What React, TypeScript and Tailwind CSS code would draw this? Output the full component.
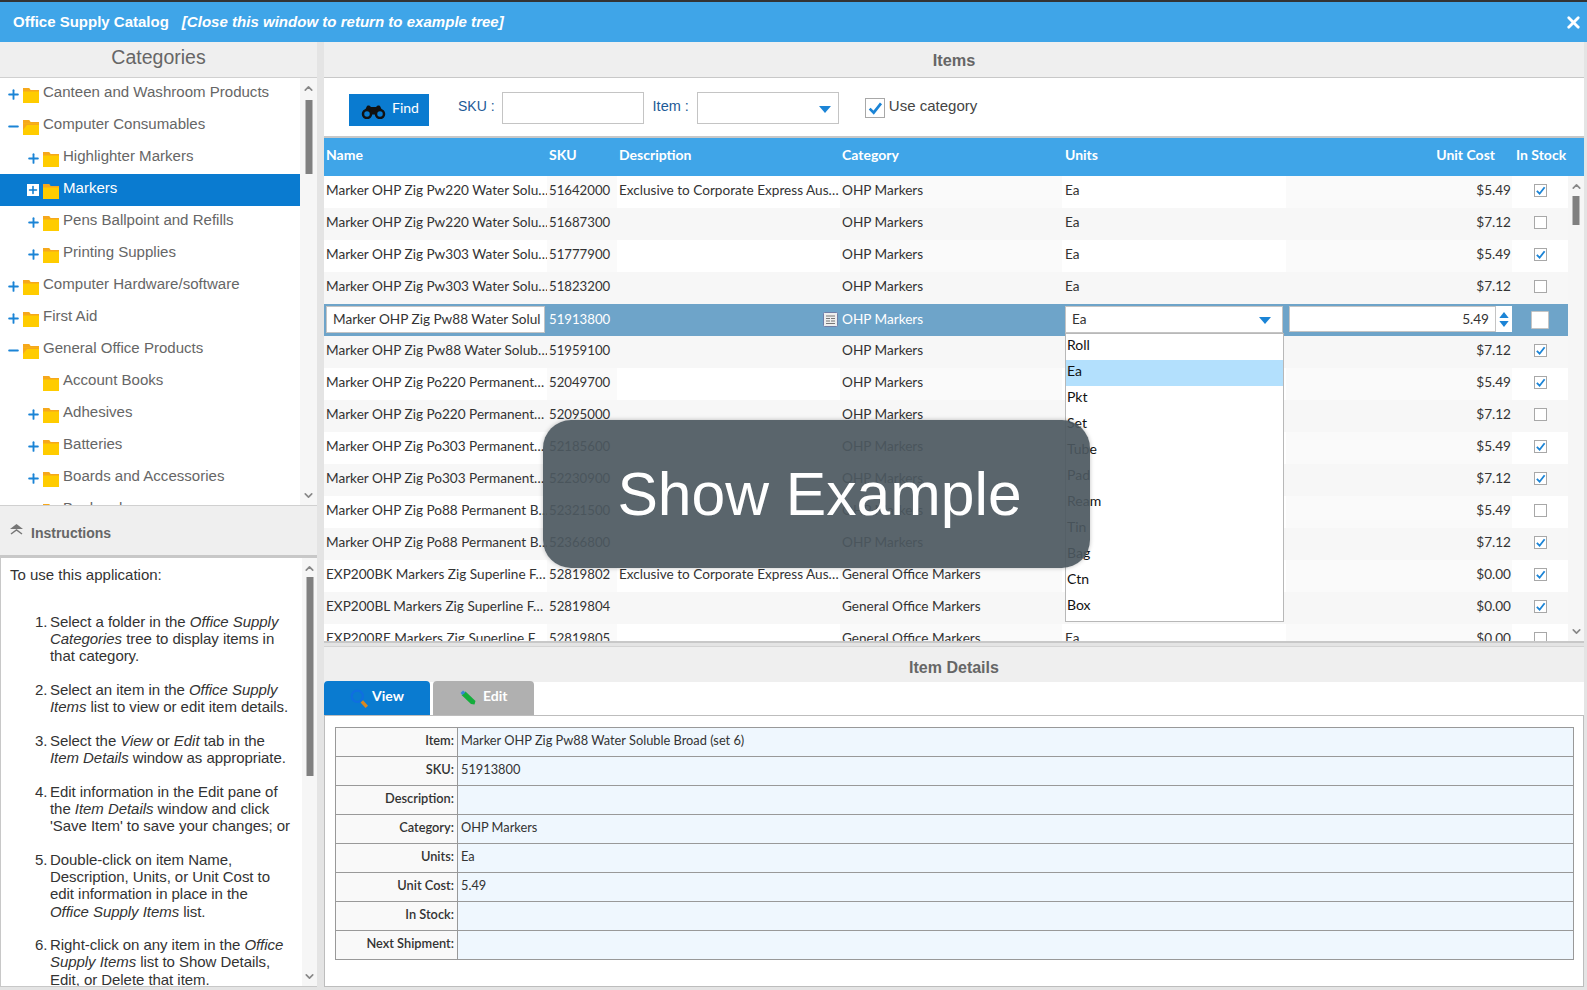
import { ChevronDown, ChevronUp, Minus, Plus, X } from "lucide-react";

const treeRows = [
  { label: "Canteen and Washroom Products", depth: 0, mark: "plus" },
  { label: "Computer Consumables", depth: 0, mark: "minus", open: true },
  { label: "Highlighter Markers", depth: 1, mark: "plus" },
  { label: "Markers", depth: 1, mark: "box", selected: true },
  { label: "Pens Ballpoint and Refills", depth: 1, mark: "plus" },
  { label: "Printing Supplies", depth: 1, mark: "plus" },
  { label: "Computer Hardware/software", depth: 0, mark: "plus" },
  { label: "First Aid", depth: 0, mark: "plus" },
  { label: "General Office Products", depth: 0, mark: "minus", open: true },
  { label: "Account Books", depth: 1, mark: "none" },
  { label: "Adhesives", depth: 1, mark: "plus" },
  { label: "Batteries", depth: 1, mark: "plus" },
  { label: "Boards and Accessories", depth: 1, mark: "plus" },
  { label: "Bookends", depth: 1, mark: "plus" },
];

const EXCL = "Exclusive to Corporate Express Aus…";

const items = [
  ["Marker OHP Zig Pw220 Water Solu…", "51642000", EXCL, "OHP Markers", "$5.49", true],
  ["Marker OHP Zig Pw220 Water Solu…", "51687300", "", "OHP Markers", "$7.12", false],
  ["Marker OHP Zig Pw303 Water Solu…", "51777900", "", "OHP Markers", "$5.49", true],
  ["Marker OHP Zig Pw303 Water Solu…", "51823200", "", "OHP Markers", "$7.12", false],
  ["Marker OHP Zig Pw88 Water Solul", "51913800", "", "OHP Markers", "5.49", false],
  ["Marker OHP Zig Pw88 Water Solub…", "51959100", "", "OHP Markers", "$7.12", true],
  ["Marker OHP Zig Po220 Permanent…", "52049700", "", "OHP Markers", "$5.49", true],
  ["Marker OHP Zig Po220 Permanent…", "52095000", "", "OHP Markers", "$7.12", false],
  ["Marker OHP Zig Po303 Permanent…", "52185600", "", "OHP Markers", "$5.49", true],
  ["Marker OHP Zig Po303 Permanent…", "52230900", "", "OHP Markers", "$7.12", true],
  ["Marker OHP Zig Po88 Permanent B…", "52321500", "", "OHP Markers", "$5.49", false],
  ["Marker OHP Zig Po88 Permanent B…", "52366800", "", "OHP Markers", "$7.12", true],
  ["EXP200BK Markers Zig Superline F…", "52819802", EXCL, "General Office Markers", "$0.00", true],
  ["EXP200BL Markers Zig Superline F…", "52819804", "", "General Office Markers", "$0.00", true],
  ["EXP200RE Markers Zig Superline F…", "52819805", "", "General Office Markers", "$0.00", false],
] as const;

const units = ["Roll", "Ea", "Pkt", "Set", "Tube", "Pad", "Ream", "Tin", "Bag", "Ctn", "Box"];

const details = [
  ["Item:", "Marker OHP Zig Pw88 Water Soluble Broad (set 6)"],
  ["SKU:", "51913800"],
  ["Description:", ""],
  ["Category:", "OHP Markers"],
  ["Units:", "Ea"],
  ["Unit Cost:", "5.49"],
  ["In Stock:", ""],
  ["Next Shipment:", ""],
];

const Folder = ({ open }: { open?: boolean }) => (
  <svg width="16" height="15" viewBox="0 0 16 15" className="shrink-0">
    <path d="M0 0h6l1.500 2H16v13H0z" fill="#ffcc00" />
    <path d="M0 0h6l1.500 2H16v1.500H0z" fill="#f6a81c" />
    {open && <path d="M0 3.500h16v1.500H4L0 10z" fill="#f6a81c" />}
  </svg>
);

const TreeRow = ({ row }: { row: (typeof treeRows)[number] }) => (
  <div
    className={`flex h-8 shrink-0 items-center ${row.depth ? "pl-[27px]" : "pl-[7px]"} ${
      row.selected ? "bg-[#0a7bd0] text-white" : "text-[#666666]"
    }`}
  >
    <span className="flex h-3 w-3 shrink-0 items-center justify-center text-[#1b84d6]">
      {row.mark === "plus" && <Plus size={15} strokeWidth={3} className="shrink-0" />}
      {row.mark === "minus" && <Minus size={15} strokeWidth={3} className="shrink-0" />}
      {row.mark === "box" && (
        <span className="flex h-3 w-3 items-center justify-center bg-white text-[#0a7bd0]">
          <Plus size={12} strokeWidth={3} />
        </span>
      )}
    </span>
    <span className="ml-[4px] mt-[2px]">
      <Folder open={row.open} />
    </span>
    <span className="ml-[4px] -mt-[3px] whitespace-nowrap text-[15.050px]">{row.label}</span>
  </div>
);

const ScrollBar = ({ thumbTop, thumbH, width }: { thumbTop: string; thumbH: string; width: string }) => (
  <div className={`relative flex h-full shrink-0 flex-col items-center justify-between bg-[#f6f6f6] ${width}`}>
    <ChevronUp size={13} strokeWidth={3} className="mt-[4px] text-[#888888]" />
    <div className={`absolute left-1/2 w-[7px] -translate-x-1/2 bg-[#808080] ${thumbTop} ${thumbH}`} />
    <ChevronDown size={13} strokeWidth={3} className="mb-[3px] text-[#888888]" />
  </div>
);

const Check = ({ checked, big }: { checked: boolean; big?: boolean }) => (
  <span
    className={`flex items-center justify-center border-[1.5px] border-[#a8a8a8] bg-white ${
      big ? "h-5 w-5" : "h-[13px] w-[13px]"
    }`}
  >
    {checked && (
      <svg viewBox="0 0 12 12" className={big ? "h-4 w-4" : "h-[11px] w-[11px]"}>
        <path d="M2 6.500 5 9.500 10.500 2.500" fill="none" stroke="#1b84d6" strokeWidth="2" />
      </svg>
    )}
  </span>
);

const Caret = () => (
  <svg width="12" height="7" viewBox="0 0 12 7">
    <path d="M0 0h12L6 7z" fill="#1b84d6" />
  </svg>
);

const Binoculars = () => (
  <svg width="25" height="14" viewBox="0 0 25 14" className="mt-[3px]">
    <path d="M6 1c2-1 3 0 4 1h5c1-1 2-2 4-1l3 6H3z" fill="#111111" />
    <circle cx="6" cy="9" r="4" fill="#0a7bd0" stroke="#111111" strokeWidth="2.500" />
    <circle cx="19" cy="9" r="4" fill="#0a7bd0" stroke="#111111" strokeWidth="2.500" />
    <rect x="9.500" y="6" width="6" height="3.500" fill="#111111" />
  </svg>
);

const Instruction = ({ n, children }: { n: number; children: React.ReactNode }) => (
  <div className="mb-[16.800px] flex">
    <span className="w-[15px] shrink-0">{n}.</span>
    <p className="whitespace-nowrap">{children}</p>
  </div>
);

const GridRow = ({ index }: { index: number }) => {
  const [name, sku, desc, cat, cost, inStock] = items[index];
  const odd = index % 2 === 0;
  const shade = odd ? "bg-[#fafafa]" : "bg-[#f7f7f7]";
  const base = odd ? "bg-white" : "bg-[#f7f7f7]";
  return (
    <div className="flex h-8 shrink-0 text-[13.600px] text-[#333333]">
      <div className={`w-[223px] whitespace-nowrap pl-[2px] leading-[29px] ${base}`}>{name}</div>
      <div className={`w-[70px] pl-[2px] text-[13.200px] leading-[29px] ${shade}`}>{sku}</div>
      <div className={`w-[223px] whitespace-nowrap pl-[2px] leading-[29px] ${base}`}>{desc}</div>
      <div className={`w-[222px] pl-[2px] leading-[29px] ${shade}`}>{cat}</div>
      <div className={`w-[224px] pl-[3px] leading-[29px] ${base}`}>Ea</div>
      <div className={`w-[226px] pr-[1px] text-right leading-[29px] ${shade}`}>{cost}</div>
      <div className={`flex w-[56px] items-center justify-center pb-[4px] ${base}`}>
        <Check checked={inStock} />
      </div>
    </div>
  );
};

const SelectedRow = () => (
  <div className="flex h-8 shrink-0 items-start bg-[#6ea4c9] pt-[2px] text-[13.600px] leading-[27px] text-white">
    <div className="w-[223px] pl-[2px]">
      <div className="h-[27px] w-[219px] overflow-hidden whitespace-nowrap border-[1.5px] border-[#c4c4c4] bg-white pl-[6px] leading-[24px] text-[#333333]">
        Marker OHP Zig Pw88 Water Solul
      </div>
    </div>
    <div className="w-[70px] pl-[2px] text-[13.200px]">51913800</div>
    <div className="flex h-[27px] w-[223px] items-center justify-end pr-[2px]">
      <svg width="15" height="15" viewBox="0 0 15 15">
        <rect x="0.500" y="0.500" width="14" height="14" rx="1" fill="#eeeeee" stroke="#6f7fa8" />
        <path d="M3 4h9M3 6.500h4M8 6.500h4M3 9h4M8 9h4M3 11.500h9" stroke="#777777" />
      </svg>
    </div>
    <div className="w-[222px] pl-[2px]">OHP Markers</div>
    <div className="w-[224px] pl-[3px]">
      <div className="flex h-[27px] w-[218px] items-center justify-between border-[1.5px] border-[#c4c4c4] bg-white pl-[6px] pr-[11px] text-[#333333]">
        Ea
        <span className="mt-[2px]">
          <Caret />
        </span>
      </div>
    </div>
    <div className="flex w-[226px] items-center">
      <div className="ml-[3px] flex h-[26px] w-[207px] items-center justify-end border-[1.5px] border-[#c4c4c4] bg-white pr-[6px] text-[#333333]">
        5.49
      </div>
      <div className="flex h-[26px] w-[16px] flex-col items-center justify-center gap-[3px] bg-white">
        <svg width="10" height="6" viewBox="0 0 11 7">
          <path d="M0 7h11L5.500 0z" fill="#1b84d6" />
        </svg>
        <svg width="10" height="6" viewBox="0 0 11 7">
          <path d="M0 0h11L5.500 7z" fill="#1b84d6" />
        </svg>
      </div>
    </div>
    <div className="flex h-[28px] w-[56px] items-center justify-center">
      <span className="h-[18px] w-[18px] rounded-[1px] border border-[#c4c4c4] bg-white" />
    </div>
  </div>
);

export default function App() {
  return (
    <div className="relative flex h-[990px] w-[1587px] flex-col overflow-hidden border-t-2 border-[#333333] bg-[#e4e4e4] font-['Liberation_Sans',sans-serif]">
      {/* title bar */}
      <div className="flex h-[40px] shrink-0 items-center bg-[#3fa5e8] pl-[13px] pr-[4px] text-white">
        <span className="text-[15px] font-bold">Office Supply Catalog</span>
        <span className="ml-[13px] text-[15.050px] font-bold italic">[Close this window to return to example tree]</span>
        <X size={19} strokeWidth={3.5} className="ml-auto" />
      </div>

      <div className="flex min-h-0 flex-1 pb-[3px]">
        {/* left column */}
        <div className="flex w-[317px] shrink-0 flex-col">
          <div className="flex h-[35px] shrink-0 items-center justify-center bg-[#efefef] pb-[4px] text-[19.500px] text-[#666666]">
            Categories
          </div>
          <div className="flex h-[429px] shrink-0 overflow-hidden border-y border-[#d0d0d0] bg-white">
            <div className="flex w-[300px] shrink-0 flex-col">
              {treeRows.map((row) => (
                <TreeRow key={row.label} row={row} />
              ))}
            </div>
            <ScrollBar width="w-[17px]" thumbTop="top-[22px]" thumbH="h-[74px]" />
          </div>
          <div className="flex h-[51px] shrink-0 items-center gap-[8px] border-b-2 border-[#c8c8c8] bg-[#efefef] pl-[10px] text-[14px] font-bold text-[#666666]">
            <svg width="13" height="11" viewBox="0 0 13 11" className="-mt-[3px]">
              <path d="M6.500 0 13 5H0z" fill="#777777" />
              <path d="M1 10 6.500 6 12 10" fill="none" stroke="#777777" strokeWidth="1.5" />
            </svg>
            <span className="mt-[6px]">Instructions</span>
          </div>
          <div className="flex min-h-0 flex-1 border border-[#c8c8c8] bg-white">
            <div className="w-[301px] shrink-0 overflow-hidden pl-[9px] pt-[8px] text-[15px] leading-[17.100px] text-[#333333]">
              <p className="mb-[30px]">To use this application:</p>
              <div className="pl-[25px] tracking-[-0.05px]">
                <Instruction n={1}>
                  Select a folder in the <i>Office Supply</i>
                  <br />
                  <i>Categories</i> tree to display items in
                  <br />
                  that category.
                </Instruction>
                <Instruction n={2}>
                  Select an item in the <i>Office Supply</i>
                  <br />
                  <i>Items</i> list to view or edit item details.
                </Instruction>
                <Instruction n={3}>
                  Select the <i>View</i> or <i>Edit</i> tab in the
                  <br />
                  <i>Item Details</i> window as appropriate.
                </Instruction>
                <Instruction n={4}>
                  Edit information in the Edit pane of
                  <br />
                  the <i>Item Details</i> window and click
                  <br />
                  'Save Item' to save your changes; or
                </Instruction>
                <Instruction n={5}>
                  Double-click on item Name,
                  <br />
                  Description, Units, or Unit Cost to
                  <br />
                  edit information in place in the
                  <br />
                  <i>Office Supply Items</i> list.
                </Instruction>
                <Instruction n={6}>
                  Right-click on any item in the <i>Office</i>
                  <br />
                  <i>Supply Items</i> list to Show Details,
                  <br />
                  Edit, or Delete that item.
                </Instruction>
              </div>
            </div>
            <ScrollBar width="w-[15px]" thumbTop="top-[19px]" thumbH="h-[199px]" />
          </div>
        </div>

        {/* right column */}
        <div className="ml-[7px] flex w-[1260px] shrink-0 flex-col">
          <div className="flex h-[36px] shrink-0 items-center justify-center border-b border-[#c8c8c8] bg-[#efefef] pt-[2px] text-[16.300px] font-bold text-[#666666]">
            Items
          </div>
          <div className="flex h-[60px] shrink-0 items-center border-b-2 border-[#c8c8c8] bg-white pl-[25px] text-[14.500px]">
            <button className="mt-[6px] flex h-[32px] w-[80px] items-center gap-[6px] bg-[#0a7bd0] pl-[12px] font-['Lato',sans-serif] text-[14px] text-white">
              <Binoculars />
              <span className="-mt-[5px]">Find</span>
            </button>
            <span className="-mt-[1px] ml-[29px] text-[14px] text-[#1d5a96]">SKU :</span>
            <span className="ml-[7px] mt-[2px] h-[32px] w-[142px] border-[1.5px] border-[#c4c4c4]" />
            <span className="-mt-[1px] ml-[9px] text-[#1d5a96]">Item :</span>
            <span className="ml-[8px] mt-[2px] flex h-[32px] w-[142px] items-center justify-end border-[1.5px] border-[#c4c4c4] pr-[7px] pt-[2px]">
              <Caret />
            </span>
            <span className="ml-[26px] mt-[2px]">
              <Check checked big />
            </span>
            <span className="-mt-[1px] ml-[4px] text-[15px] text-[#444444]">Use category</span>
          </div>

          {/* item grid */}
          <div className="relative h-[505px] shrink-0 overflow-hidden border-b-2 border-[#c8c8c8] bg-white">
            <div className="flex h-[38px] w-[1260px] items-center bg-[#3fa5e8] pb-[6px] font-['Lato',sans-serif] text-[14px] font-bold text-white">
              <div className="w-[223px] pl-[2px]">Name</div>
              <div className="w-[70px] pl-[2px]">SKU</div>
              <div className="w-[223px] pl-[2px]">Description</div>
              <div className="w-[222px] pl-[2px]">Category</div>
              <div className="w-[224px] pl-[3px]">Units</div>
              <div className="w-[209px] text-right">Unit Cost</div>
              <div className="ml-[21px] whitespace-nowrap">In Stock</div>
            </div>
            <div className="flex font-['Lato',sans-serif]">
              <div className="flex w-[1244px] shrink-0 flex-col">
                {items.map((_, i) => (i === 4 ? <SelectedRow key={i} /> : <GridRow key={i} index={i} />))}
              </div>
              <div className="h-[465px]">
                <ScrollBar width="w-[16px]" thumbTop="top-[20px]" thumbH="h-[29px]" />
              </div>
            </div>
            {/* unit drop-down */}
            <div className="absolute left-[741px] top-[195px] flex w-[219px] flex-col border border-[#b8b8b8] bg-white pb-[1px] font-['Lato',sans-serif] text-[14px] text-[#111111]">
              {units.map((u) => (
                <div key={u} className={`h-[26px] pl-[1px] leading-[22px] ${u === "Ea" ? "bg-[#b3e0fd]" : ""}`}>
                  {u}
                </div>
              ))}
            </div>
          </div>

          {/* details */}
          <div className="mt-[3px] flex h-[36px] shrink-0 items-center justify-center border-t border-[#d4d4d4] bg-[#efefef] pt-[6px] text-[16px] font-bold text-[#666666]">
            Item Details
          </div>
          <div className="flex h-[34px] shrink-0 items-end border-b border-[#bdbdbd] bg-white font-['Lato',sans-serif] text-[14px] font-bold text-white">
            <div className="flex h-[34px] w-[106px] items-center gap-[4px] rounded-t-[4px] bg-[#0a7bd0] pb-[5px] pl-[26px]">
              <svg width="18" height="19" viewBox="0 0 16 17" className="mt-[6px]">
                <circle cx="6.500" cy="6.500" r="5" fill="none" stroke="#0f6fe0" strokeWidth="2" />
                <path d="M10.500 11 15 16" stroke="#d9881f" strokeWidth="3" />
              </svg>
              View
            </div>
            <div className="ml-[3px] flex h-[34px] w-[101px] items-center gap-[7px] rounded-t-[4px] bg-[#b0b0b0] pb-[5px] pl-[27px]">
              <svg width="16" height="15" viewBox="0 0 16 15" className="mt-[3px]">
                <path d="M1.500 5 5.500 1.500 15.500 11l-1 3.500-3.500-.5z" fill="#14ad3c" />
                <path d="M0.500 3 3 0.500l2.500 2-3 2.500z" fill="#3987d6" />
              </svg>
              Edit
            </div>
          </div>
          <div className="min-h-0 flex-1 overflow-hidden border-x border-b border-[#bdbdbd] bg-white pl-[10px] pr-[9px] pt-[11px] font-['Lato',sans-serif] text-[12.800px]">
            <div className="flex flex-col border border-[#999999] border-b-0">
              {details.map(([label, value]) => (
                <div key={label} className="flex h-[29px] border-b border-[#999999]">
                  <div className="w-[122px] shrink-0 border-r border-[#999999] bg-[#f9f9f9] pr-[3px] text-right font-semibold leading-[24px] text-[#333333]">
                    {label}
                  </div>
                  <div className="flex-1 bg-[#eff7fe] pl-[3px] leading-[24px] text-[#333333]">{value}</div>
                </div>
              ))}
            </div>
          </div>
        </div>
      </div>

      {/* promo overlay */}
      <div className="absolute left-[543px] top-[418px] flex h-[148px] w-[547px] items-center justify-center rounded-[28px] bg-[#4c585f]/92 pl-[6px] text-[60.600px] text-white shadow-[0_0_4px_rgba(0,0,0,0.25)]">
        Show Example
      </div>
    </div>
  );
}
